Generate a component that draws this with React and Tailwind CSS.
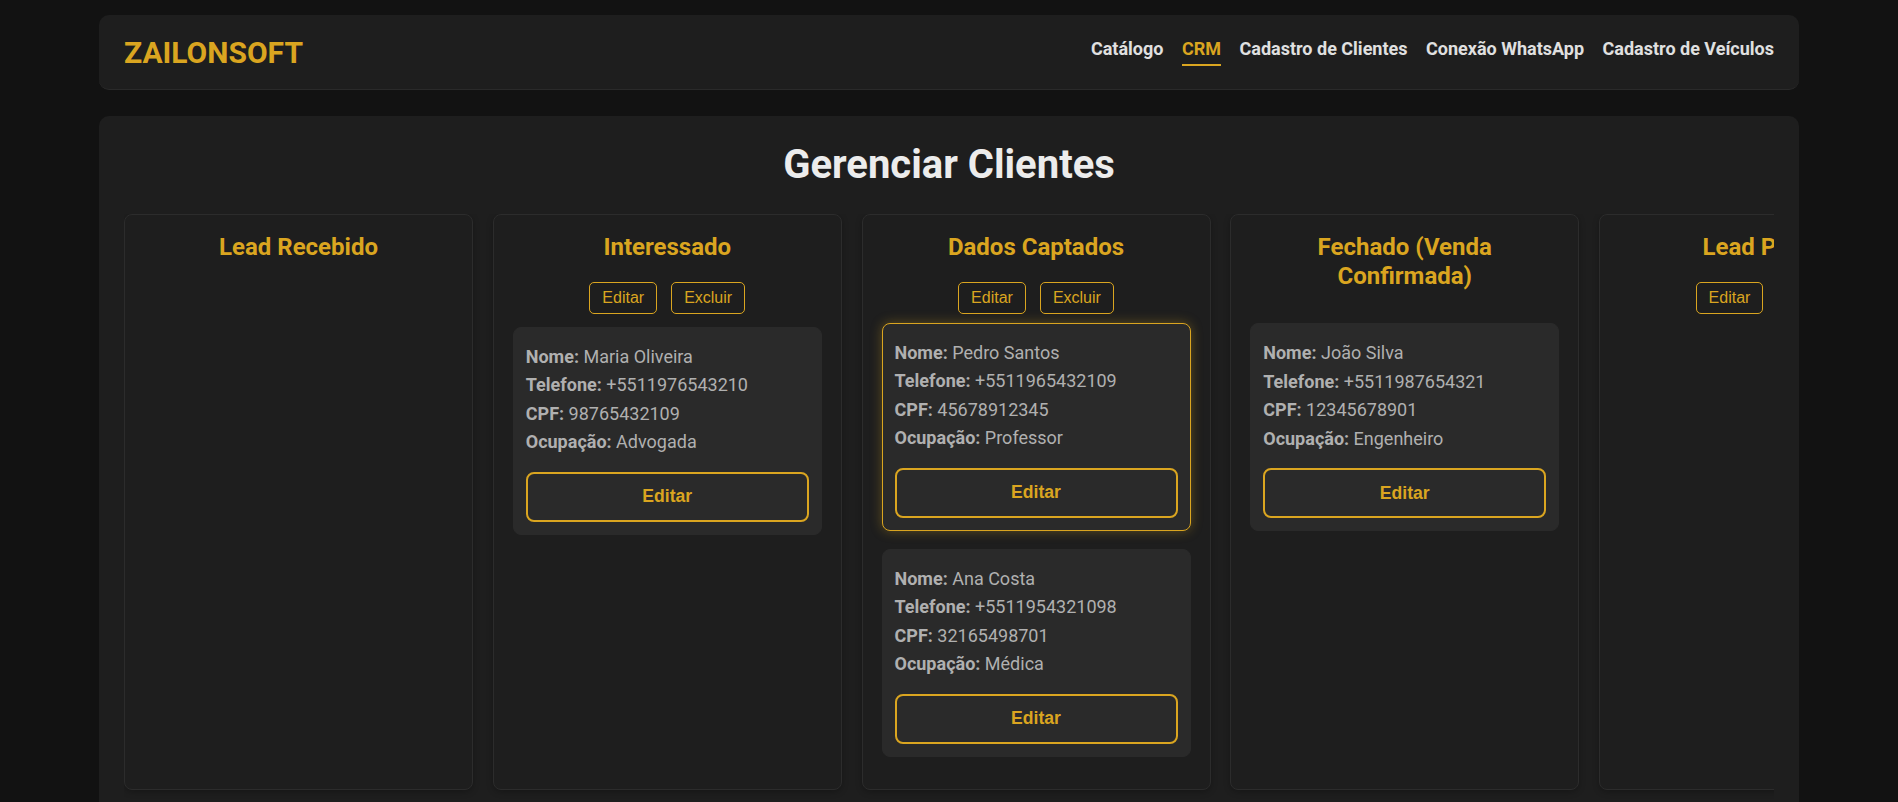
const columns = [
  { title: "Lead Recebido", actions: [], clients: [] },
  {
    title: "Interessado",
    actions: ["Editar", "Excluir"],
    clients: [
      { nome: "Maria Oliveira", telefone: "+5511976543210", cpf: "98765432109", ocupacao: "Advogada" },
    ],
  },
  {
    title: "Dados Captados",
    actions: ["Editar", "Excluir"],
    clients: [
      { nome: "Pedro Santos", telefone: "+5511965432109", cpf: "45678912345", ocupacao: "Professor", selected: true },
      { nome: "Ana Costa", telefone: "+5511954321098", cpf: "32165498701", ocupacao: "Médica" },
    ],
  },
  {
    title: "Fechado (Venda Confirmada)",
    actions: [],
    clients: [
      { nome: "João Silva", telefone: "+5511987654321", cpf: "12345678901", ocupacao: "Engenheiro" },
    ],
  },
  { title: "Lead Perdido", actions: ["Editar", "Excluir"], clients: [] },
];

const navLinks = ["Catálogo", "CRM", "Cadastro de Clientes", "Conexão WhatsApp", "Cadastro de Veículos"];

function ClientCard({ client }) {
  return (
    <div
      className={`mb-[14px] rounded-[8px] border bg-[#2a2a2a] px-[12px] pt-[15px] pb-[12px] ${
        client.selected
          ? "border-[#daa520] -translate-y-[4px] shadow-[0_0_12px_rgba(218,165,32,0.35)]"
          : "border-[#2a2a2a]"
      }`}
    >
      <div className="mb-[15px] text-[18px] leading-[28.5px] text-[#b0b0b0]">
        <p><strong>Nome:</strong> {client.nome}</p>
        <p><strong>Telefone:</strong> {client.telefone}</p>
        <p><strong>CPF:</strong> {client.cpf}</p>
        <p><strong>Ocupação:</strong> {client.ocupacao}</p>
      </div>
      <button className="h-[50px] w-full rounded-[8px] border-2 border-[#daa520] bg-transparent font-['Liberation_Sans',Arial,sans-serif] text-[17.6px] font-bold text-[#daa520]">
        Editar
      </button>
    </div>
  );
}

function Column({ col }) {
  return (
    <div className="w-[349px] flex-none rounded-[8px] border border-[#2c2c2c] bg-[#1e1e1e] px-[19px] pt-[18px] pb-[18px] shadow-[0_2px_6px_rgba(0,0,0,0.25)]">
      <h3 className="mb-[20px] text-center text-[24px] leading-[28.5px] font-bold text-[#daa520]">{col.title}</h3>
      <div className="mb-[13px] flex justify-center gap-[14px]">
        {col.actions.map((a) => (
          <button
            key={a}
            className="rounded-[5px] border border-[#daa520] bg-transparent px-[12px] py-[6px] font-['Liberation_Sans',Arial,sans-serif] text-[16px] leading-[normal] text-[#daa520]"
          >
            {a}
          </button>
        ))}
      </div>
      {col.clients.map((c) => (
        <ClientCard key={c.cpf} client={c} />
      ))}
    </div>
  );
}

export default function App() {
  return (
    <div className="min-h-screen bg-[#121212] font-['Roboto',sans-serif]">
      <div className="mx-auto max-w-[1700px] pt-[15px]">
        <header className="mb-[26px] flex h-[75px] items-center justify-between rounded-[10px] border-b border-[#2a2a2a] bg-[#1e1e1e] px-[25px]">
          <h1 className="text-[30px] leading-[normal] font-bold text-[#daa520]">ZAILONSOFT</h1>
          <nav className="flex items-center gap-[18.5px]">
            {navLinks.map((l) => (
              <a
                key={l}
                className={`border-b-2 pb-[5px] text-[18px] leading-[normal] font-bold ${
                  l === "CRM" ? "border-[#daa520] text-[#daa520]" : "border-transparent text-[#e0e0e0]"
                }`}
              >
                {l}
              </a>
            ))}
          </nav>
        </header>

        <main className="rounded-[10px] bg-[#1e1e1e] px-[25px] pt-[25px] pb-[25px]">
          <h2 className="mb-[26px] text-center text-[40px] leading-[normal] font-bold text-[#ececec]">Gerenciar Clientes</h2>
          <div className="flex gap-[19.75px] overflow-x-auto pb-[12px]">
            {columns.map((col) => (
              <Column key={col.title} col={col} />
            ))}
          </div>
        </main>
      </div>
    </div>
  );
}
